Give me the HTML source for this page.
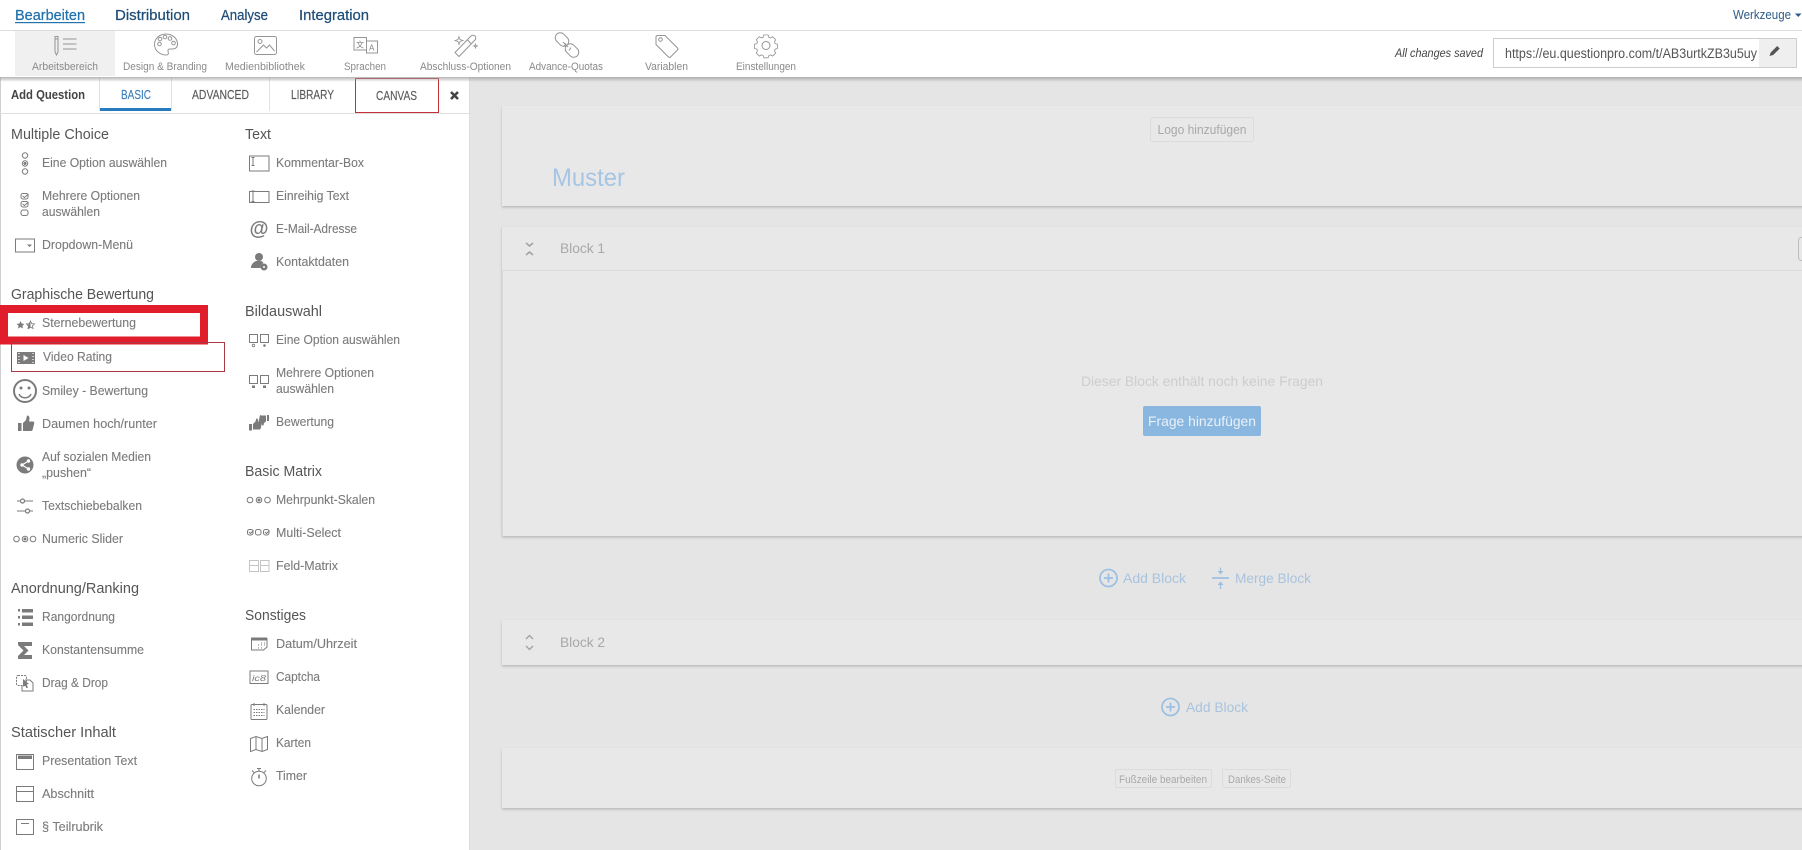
<!DOCTYPE html>
<html lang="de">
<head>
<meta charset="utf-8">
<title>Bearbeiten</title>
<style>
html,body{margin:0;padding:0;width:1802px;height:850px;overflow:hidden;background:#e5e5e5}
svg{display:block}
text{font-family:"Liberation Sans",sans-serif}
.nav{font-size:15px;fill:#1f4d78;stroke:#1f4d78;stroke-width:.25px}
.tb{font-size:11px;fill:#8a8a8a}
.tab{font-size:12.5px;fill:#5a5a5a;stroke:#5a5a5a;stroke-width:.15px}
.sec{font-size:14.5px;fill:#555}
.it{font-size:13px;fill:#7b7b7b;stroke:#7b7b7b;stroke-width:.12px}
.i{fill:none;stroke:#7b7b7b;stroke-width:1}
.f{fill:#7b7b7b;stroke:none}
.t{fill:none;stroke:#959595;stroke-width:1}
.lb{fill:none;stroke:#9dc0e2;stroke-width:1.8}
.ln{font-size:14px;fill:#a9c3de}
.btn{fill:#e8e8e8;stroke:#dcdcdc}
.sm{fill:#a8a8a8}
</style>
</head>
<body>
<svg width="1802" height="850" viewBox="0 0 1802 850" xmlns="http://www.w3.org/2000/svg">
<defs>
<filter id="s" x="-2%" y="-10%" width="104%" height="125%"><feDropShadow dx="0" dy="1.5" stdDeviation="1.2" flood-color="#000" flood-opacity=".2"/></filter>
<linearGradient id="hs" x1="0" y1="0" x2="0" y2="1"><stop offset="0" stop-color="#9d9d9d" stop-opacity=".75"/><stop offset="1" stop-color="#9d9d9d" stop-opacity="0"/></linearGradient>
</defs>

<!-- canvas -->
<rect width="1802" height="850" fill="#e5e5e5"/>
<g filter="url(#s)">
<rect x="502" y="106" width="1320" height="100" fill="#e8e8e8"/>
<rect x="502" y="226" width="1320" height="310" fill="#e8e8e8"/>
<rect x="502" y="620" width="1320" height="45" fill="#e8e8e8"/>
<rect x="502" y="748" width="1320" height="60" fill="#e8e8e8"/>
</g>
<rect x="502" y="106" width="1320" height="1" fill="#eaeaea"/>
<rect x="502" y="226" width="1320" height="1" fill="#e2e2e2"/>
<rect x="502" y="270" width="1320" height="1" fill="#dadada"/>
<rect x="502" y="271" width="1" height="265" fill="#d8d8d8"/>
<rect x="1150.5" y="117.5" width="103" height="24" rx="2" class="btn"/>
<text x="1157.5" y="134" font-size="12.5" textLength="89" lengthAdjust="spacingAndGlyphs" class="sm">Logo hinzufügen</text>
<text x="552" y="186" font-size="25" fill="#a6c5e5" textLength="73" lengthAdjust="spacingAndGlyphs">Muster</text>
<rect x="1798.5" y="237.5" width="8" height="23" rx="3" fill="#e8e8e8" stroke="#bdbdbd"/>
<path d="M526 243l3.5 3 3.5-3M526 255l3.500-3 3.500 3" fill="none" stroke="#a0a0a0" stroke-width="1.5"/>
<text x="560" y="253" font-size="14" textLength="45" lengthAdjust="spacingAndGlyphs" fill="#a8a8a8">Block 1</text>
<text x="1081" y="386" font-size="14" textLength="242" lengthAdjust="spacingAndGlyphs" fill="#cdcdcd">Dieser Block enthält noch keine Fragen</text>
<rect x="1143" y="406" width="118" height="30" rx="2" fill="#8ab7e0"/>
<text x="1148" y="426" font-size="14" textLength="108" lengthAdjust="spacingAndGlyphs" fill="#e8f1f9">Frage hinzufügen</text>

<circle cx="1108.5" cy="578" r="8.5" class="lb"/>
<path d="M1104 578h9M1108.500 573.500v9" class="lb"/>
<text x="1123" y="583" textLength="63" lengthAdjust="spacingAndGlyphs" class="ln">Add Block</text>
<path d="M1212 578h17" class="lb"/>
<path d="M1220.5 567.5v5" class="lb" style="stroke-width:1.300"/>
<path d="M1220.5 583v6" class="lb" style="stroke-width:1.300"/>
<path d="M1217.5 571h6l-3 3.500zM1217.500 585h6l-3-3.500z" fill="#9dc0e2"/>
<text x="1235" y="583" textLength="76" lengthAdjust="spacingAndGlyphs" class="ln">Merge Block</text>

<path d="M526 639l3.5-3.5 3.500 3.500M526 646l3.500 3.500 3.500-3.500" fill="none" stroke="#a0a0a0" stroke-width="1.3"/>
<text x="560" y="647" font-size="14" textLength="45" lengthAdjust="spacingAndGlyphs" fill="#a8a8a8">Block 2</text>

<circle cx="1170.5" cy="707" r="8.5" class="lb"/>
<path d="M1166 707h9M1170.500 702.500v9" class="lb"/>
<text x="1186" y="712" textLength="62" lengthAdjust="spacingAndGlyphs" class="ln">Add Block</text>

<rect x="1115.5" y="769.5" width="96" height="18" rx="1.5" class="btn"/>
<text x="1119" y="783" font-size="11" textLength="88" lengthAdjust="spacingAndGlyphs" class="sm">Fußzeile bearbeiten</text>
<rect x="1222.5" y="769.5" width="68" height="18" rx="1.5" class="btn"/>
<text x="1228" y="783" font-size="11" textLength="58" lengthAdjust="spacingAndGlyphs" class="sm">Dankes-Seite</text>

<!-- left panel -->
<rect x="0" y="77" width="469" height="773" fill="#fff"/>
<rect x="0" y="77" width="1" height="773" fill="#cfcfcf"/>
<rect x="469" y="77" width="1" height="773" fill="#dcdcdc"/>
<rect x="0" y="113" width="469" height="1" fill="#dfdfdf"/>
<text x="11" y="99" font-size="12.5" font-weight="bold" fill="#444" textLength="74" lengthAdjust="spacingAndGlyphs">Add Question</text>
<rect x="99" y="77" width="1" height="34" fill="#e2e2e2"/>
<rect x="171" y="77" width="1" height="34" fill="#e2e2e2"/>
<rect x="269" y="77" width="1" height="34" fill="#e2e2e2"/>
<rect x="100" y="108" width="71" height="3" fill="#2a7abf"/>
<text x="121" y="99" textLength="30" lengthAdjust="spacingAndGlyphs" class="tab" style="fill:#3a80bd;stroke:#3a80bd">BASIC</text>
<text x="192" y="99" textLength="57" lengthAdjust="spacingAndGlyphs" class="tab">ADVANCED</text>
<text x="291" y="99" textLength="43" lengthAdjust="spacingAndGlyphs" class="tab">LIBRARY</text>
<rect x="355.5" y="78.5" width="83" height="34" fill="#fff" stroke="#c4303a"/>
<text x="376" y="100" textLength="41" lengthAdjust="spacingAndGlyphs" class="tab">CANVAS</text>
<path d="M451 92l7 7M458 92l-7 7" stroke="#444" stroke-width="2.6" fill="none"/>

<!-- highlight boxes -->
<path d="M4 309h200v31.500H4z" fill="none" stroke="#e11d2b" stroke-width="8"/>
<rect x="11.5" y="342.5" width="213" height="29" fill="none" stroke="#a83a45"/>

<!-- left column -->
<text x="11" y="139" textLength="98" lengthAdjust="spacingAndGlyphs" class="sec">Multiple Choice</text>
<text x="42" y="167" textLength="125" lengthAdjust="spacingAndGlyphs" class="it">Eine Option auswählen</text>
<text x="42" y="200" textLength="98" lengthAdjust="spacingAndGlyphs" class="it">Mehrere Optionen</text>
<text x="42" y="216" textLength="58" lengthAdjust="spacingAndGlyphs" class="it">auswählen</text>
<text x="42" y="249" textLength="91" lengthAdjust="spacingAndGlyphs" class="it">Dropdown-Menü</text>
<text x="11" y="299" textLength="143" lengthAdjust="spacingAndGlyphs" class="sec">Graphische Bewertung</text>
<text x="42" y="327" textLength="94" lengthAdjust="spacingAndGlyphs" class="it">Sternebewertung</text>
<text x="43" y="361" textLength="69" lengthAdjust="spacingAndGlyphs" class="it">Video Rating</text>
<text x="42" y="395" textLength="106" lengthAdjust="spacingAndGlyphs" class="it">Smiley - Bewertung</text>
<text x="42" y="428" textLength="115" lengthAdjust="spacingAndGlyphs" class="it">Daumen hoch/runter</text>
<text x="42" y="461" textLength="109" lengthAdjust="spacingAndGlyphs" class="it">Auf sozialen Medien</text>
<text x="42" y="477" textLength="49" lengthAdjust="spacingAndGlyphs" class="it">„pushen“</text>
<text x="42" y="510" textLength="100" lengthAdjust="spacingAndGlyphs" class="it">Textschiebebalken</text>
<text x="42" y="543" textLength="81" lengthAdjust="spacingAndGlyphs" class="it">Numeric Slider</text>
<text x="11" y="593" textLength="128" lengthAdjust="spacingAndGlyphs" class="sec">Anordnung/Ranking</text>
<text x="42" y="621" textLength="73" lengthAdjust="spacingAndGlyphs" class="it">Rangordnung</text>
<text x="42" y="654" textLength="102" lengthAdjust="spacingAndGlyphs" class="it">Konstantensumme</text>
<text x="42" y="687" textLength="66" lengthAdjust="spacingAndGlyphs" class="it">Drag &amp; Drop</text>
<text x="11" y="737" textLength="105" lengthAdjust="spacingAndGlyphs" class="sec">Statischer Inhalt</text>
<text x="42" y="765" textLength="95" lengthAdjust="spacingAndGlyphs" class="it">Presentation Text</text>
<text x="42" y="798" textLength="52" lengthAdjust="spacingAndGlyphs" class="it">Abschnitt</text>
<text x="42" y="831" textLength="61" lengthAdjust="spacingAndGlyphs" class="it">§ Teilrubrik</text>

<!-- right column -->
<text x="245" y="139" textLength="26" lengthAdjust="spacingAndGlyphs" class="sec">Text</text>
<text x="276" y="167" textLength="88" lengthAdjust="spacingAndGlyphs" class="it">Kommentar-Box</text>
<text x="276" y="200" textLength="73" lengthAdjust="spacingAndGlyphs" class="it">Einreihig Text</text>
<text x="276" y="233" textLength="81" lengthAdjust="spacingAndGlyphs" class="it">E-Mail-Adresse</text>
<text x="276" y="266" textLength="73" lengthAdjust="spacingAndGlyphs" class="it">Kontaktdaten</text>
<text x="245" y="316" textLength="77" lengthAdjust="spacingAndGlyphs" class="sec">Bildauswahl</text>
<text x="276" y="344" textLength="124" lengthAdjust="spacingAndGlyphs" class="it">Eine Option auswählen</text>
<text x="276" y="377" textLength="98" lengthAdjust="spacingAndGlyphs" class="it">Mehrere Optionen</text>
<text x="276" y="393" textLength="58" lengthAdjust="spacingAndGlyphs" class="it">auswählen</text>
<text x="276" y="426" textLength="58" lengthAdjust="spacingAndGlyphs" class="it">Bewertung</text>
<text x="245" y="476" textLength="77" lengthAdjust="spacingAndGlyphs" class="sec">Basic Matrix</text>
<text x="276" y="504" textLength="99" lengthAdjust="spacingAndGlyphs" class="it">Mehrpunkt-Skalen</text>
<text x="276" y="537" textLength="65" lengthAdjust="spacingAndGlyphs" class="it">Multi-Select</text>
<text x="276" y="570" textLength="62" lengthAdjust="spacingAndGlyphs" class="it">Feld-Matrix</text>
<text x="245" y="620" textLength="61" lengthAdjust="spacingAndGlyphs" class="sec">Sonstiges</text>
<text x="276" y="648" textLength="81" lengthAdjust="spacingAndGlyphs" class="it">Datum/Uhrzeit</text>
<text x="276" y="681" textLength="44" lengthAdjust="spacingAndGlyphs" class="it">Captcha</text>
<text x="276" y="714" textLength="49" lengthAdjust="spacingAndGlyphs" class="it">Kalender</text>
<text x="276" y="747" textLength="35" lengthAdjust="spacingAndGlyphs" class="it">Karten</text>
<text x="276" y="780" textLength="31" lengthAdjust="spacingAndGlyphs" class="it">Timer</text>

<!-- left icons -->
<circle cx="25" cy="155.5" r="2.7" class="i"/><circle cx="25" cy="163.5" r="2.7" class="i"/><circle cx="25" cy="163.5" r="1.5" class="f"/><circle cx="25" cy="171.5" r="2.7" class="i"/>
<rect x="21" y="193.5" width="7" height="5.5" rx="2" class="i"/><rect x="21" y="201.5" width="7" height="5.5" rx="2" class="i"/><rect x="21" y="210" width="7" height="5.5" rx="2" class="i"/><path d="M22.5 196l2 1.500 4-3.500M22.500 204l2 1.500 4-3.500" class="i"/>
<rect x="15.5" y="239" width="19" height="13" class="i"/><path d="M27 244.500h5l-2.500 2.500z" class="f"/>
<path d="M20.500 321l1.200 2.600 2.800.3-2.100 1.900.6 2.700-2.500-1.400-2.500 1.400.6-2.700-2.100-1.900 2.800-.3z" class="f"/>
<path d="M30.500 321l1.200 2.600 2.800.3-2.100 1.900.6 2.700-2.500-1.400-2.500 1.400.6-2.700-2.100-1.900 2.800-.3z" class="i" style="stroke-width:.8"/><path d="M30.500 321v6.800l-2.500 1.400.6-2.700-2.100-1.900 2.800-.3z" class="f"/>
<rect x="17" y="352" width="18" height="12" class="f"/><path d="M23.500 355v6l5-3z" fill="#fff"/><path d="M18 353.500h2M18 356.500h2M18 359.500h2M18 362.500h2M32 353.500h2M32 356.500h2M32 359.500h2M32 362.500h2" stroke="#ccc" stroke-width="1"/>
<circle cx="25" cy="391" r="11" fill="none" stroke="#7b7b7b" stroke-width="2"/><circle cx="21" cy="388" r="1.5" class="f"/><circle cx="29" cy="388" r="1.5" class="f"/><path d="M19 394c2 5 10 5 12 0" fill="none" stroke="#7b7b7b" stroke-width="1.5"/>
<path d="M18 423h3.500v8H18zM23 423l3-3 1-4.500c2 0 3 1.500 2.300 4.500l-.3 1.500h4c1 0 1.500 1 1.200 2l-1.500 6c-.2.800-.8 1.500-1.700 1.500H23z" class="f"/>
<circle cx="25" cy="465" r="8.5" class="f"/><path d="M28.500 461l-6.500 4 6.500 4" fill="none" stroke="#fff" stroke-width="1.2"/><circle cx="28.500" cy="461" r="1.7" fill="#fff"/><circle cx="22" cy="465" r="1.7" fill="#fff"/><circle cx="28.500" cy="469" r="1.7" fill="#fff"/>
<path d="M17 501h16M17 511h16" class="i"/><circle cx="22.500" cy="501" r="2" fill="#fff" stroke="#7b7b7b" stroke-width="1.2"/><circle cx="27.500" cy="511" r="2" fill="#fff" stroke="#7b7b7b" stroke-width="1.2"/>
<circle cx="16.500" cy="539" r="2.8" class="i"/><circle cx="25" cy="539" r="2.8" class="i"/><circle cx="25" cy="539" r="1.5" class="f"/><circle cx="33" cy="539" r="2.8" class="i"/>
<path d="M22 609h11v3.500H22zM22 615.500h11v3.500H22zM22 622.500h11v3.500H22z" class="f"/><path d="M18 609h2v2.500h-2zM18 616h2v2.500h-2zM18 623h2v2.500h-2z" class="f"/>
<path d="M18 642h14v4h-8l4.500 4.500-4.500 4.500h8v4H18v-3l5.500-5.500L18 645z" class="f"/>
<rect x="16.5" y="675.5" width="10" height="10" rx="1.5" class="i" stroke-dasharray="2 1"/><path d="M25 680h5l3 3v8H22v-6" class="i"/><path d="M23 679l6 5-2.500.5 1.500 3-1.500.7-1.500-3-2 1.500z" class="f"/>
<rect x="16.5" y="754.5" width="17" height="15" class="i"/><rect x="18" y="755.500" width="14" height="3.5" class="f"/>
<rect x="16.5" y="786.5" width="17" height="15" class="i"/><path d="M17 791.500h16" class="i"/>
<rect x="16.5" y="819.5" width="17" height="15" class="i"/><path d="M21 823.500h8" class="i"/>

<!-- right icons -->
<rect x="249.5" y="156" width="19.5" height="15" class="i"/><path d="M251.5 157.500h3M253 157.500v8M251.500 165.500h3" class="i"/>
<rect x="249.5" y="191.5" width="19.5" height="11" class="i"/><path d="M251.5 191h3M253 191v10.500M251.500 201.500h3" class="i"/>
<text x="249.5" y="235" font-size="20" font-weight="bold" fill="#7b7b7b" textLength="19" lengthAdjust="spacingAndGlyphs">@</text>
<circle cx="259" cy="257" r="4" class="f"/><path d="M251 268c0-4 3-6 5-7h5c1.500.5 2 1 2.500 2-2 1-3 3-3 5z" class="f"/><circle cx="264" cy="267" r="3.5" class="f"/><circle cx="264" cy="267" r="1" fill="#fff"/>
<rect x="249.5" y="334.5" width="8" height="8" class="i"/><rect x="260.5" y="334.5" width="8" height="8" class="i"/><circle cx="253.500" cy="345.500" r="1.3" class="i" style="stroke-width:.8"/><circle cx="264.500" cy="345.500" r="1.3" class="f"/>
<rect x="249.5" y="375.5" width="8" height="8" class="i"/><rect x="260.5" y="375.5" width="8" height="8" class="i"/><rect x="252" y="385.500" width="3" height="2.5" class="f"/><rect x="263" y="385.500" width="3" height="2.5" class="f"/>
<path transform="translate(0 3)" d="M249 421h3v6.500h-3zM253 421l2.500-2.500.7-3c1.500 0 2.300 1 1.800 3.200h3c.8 0 1.100.7.900 1.500l-1.200 5.300c-.2.600-.6 1-1.300 1H253z" class="f"/>
<path d="M267 415h2v6h-2zM261 415.500h5v6l-2 1.500-.5 2.500c-1.500 0-2-1-1.500-3h-2.500c-.7 0-1-.6-.8-1.300l1-5c.2-.7.500-1.200 1.300-1.200z" class="f"/>
<circle cx="250" cy="500" r="2.8" class="i"/><circle cx="259" cy="500" r="2.8" class="i"/><circle cx="259" cy="500" r="1.5" class="f"/><circle cx="267.500" cy="500" r="2.8" class="i"/>
<rect x="247.5" y="529.5" width="5.500" height="5.5" rx="2" class="i"/><rect x="255.5" y="529.5" width="5.5" height="5.5" rx="2" class="i"/><rect x="263.5" y="529.5" width="5.5" height="5.5" rx="2" class="i"/><path d="M249 532l1.500 1.500 3-3M265 532l1.500 1.500 3-3" class="i"/>
<path d="M249.500 560.500h9v5h-9zM249.500 565.500h9v6h-9zM260.500 560.500h8.500v5h-8.500zM260.500 565.500h8.500v6h-8.500z" fill="none" stroke="#c4c4c4"/>
<path d="M251 637.500h16v3h-16z" class="f"/><path d="M251.500 638v12h12l3.500-3v-9" class="i"/><path d="M258 645h1M261 645h1M264 645h1M258 648h1M261 648h1M264 643h1M261 643h1" stroke="#7b7b7b"/>
<rect x="250" y="671" width="18" height="12.5" class="i"/><text x="252" y="681" font-size="8" font-style="italic" fill="#7b7b7b" textLength="14" lengthAdjust="spacingAndGlyphs">ic8</text>
<rect x="251" y="704.5" width="16" height="15" rx="1" class="i"/><path d="M254 703v3M264 703v3" class="i"/><path d="M253.500 709.500h11M253.500 712.500h11M253.500 715.500h11" stroke="#7b7b7b" stroke-dasharray="1.5 1" fill="none"/>
<path d="M250.500 738.500l5.500-2 6 2 5.500-2v13l-5.500 2-6-2-5.500 2zM256 736.500v13M262 738.500v13" class="i"/>
<circle cx="259" cy="778.5" r="7.3" class="i"/><path d="M259 774.500v4" stroke="#7b7b7b" stroke-width="1.5"/><path d="M257 768.500h4M259 768.500v2.500M252 770.500l2 2M266 770.500l-2 2" class="i"/>

<!-- header -->
<rect x="0" y="77" width="1802" height="5" fill="url(#hs)"/>
<rect x="0" y="0" width="1802" height="77" fill="#fff"/>
<rect x="0" y="30" width="1802" height="1" fill="#dcdcdc"/>
<rect x="15" y="31" width="100" height="45" fill="#f0f0f0"/>

<text x="15" y="20" textLength="70" lengthAdjust="spacingAndGlyphs" class="nav" style="fill:#2272ad;stroke:#2272ad">Bearbeiten</text>
<rect x="15" y="22" width="70" height="1.2" fill="#2272ad"/>
<text x="115" y="20" textLength="75" lengthAdjust="spacingAndGlyphs" class="nav">Distribution</text>
<text x="221" y="20" textLength="47" lengthAdjust="spacingAndGlyphs" class="nav">Analyse</text>
<text x="299" y="20" textLength="70" lengthAdjust="spacingAndGlyphs" class="nav">Integration</text>
<text x="1733" y="19" font-size="13" fill="#2d5b85" textLength="58" lengthAdjust="spacingAndGlyphs">Werkzeuge</text>
<path d="M1795 13.500h6.500l-3.250 3.500z" fill="#2d5b85"/>

<text x="32" y="70" textLength="66" lengthAdjust="spacingAndGlyphs" class="tb">Arbeitsbereich</text>
<text x="123" y="70" textLength="84" lengthAdjust="spacingAndGlyphs" class="tb">Design &amp; Branding</text>
<text x="225" y="70" textLength="80" lengthAdjust="spacingAndGlyphs" class="tb">Medienbibliothek</text>
<text x="344" y="70" textLength="42" lengthAdjust="spacingAndGlyphs" class="tb">Sprachen</text>
<text x="420" y="70" textLength="91" lengthAdjust="spacingAndGlyphs" class="tb">Abschluss-Optionen</text>
<text x="529" y="70" textLength="74" lengthAdjust="spacingAndGlyphs" class="tb">Advance-Quotas</text>
<text x="645" y="70" textLength="43" lengthAdjust="spacingAndGlyphs" class="tb">Variablen</text>
<text x="736" y="70" textLength="60" lengthAdjust="spacingAndGlyphs" class="tb">Einstellungen</text>

<!-- toolbar icons -->
<path d="M55 36.500h3v15.500l-1.500 3-1.500-3z" class="t"/><path d="M55 39h3" class="t"/><path d="M63 39h13.500M63 44h13.500M63 49h13.500" class="t"/>
<path d="M166 34c6.500 0 11.500 4.500 11.500 10 0 4-3 5-5.500 5h-2c-2 0-2.500 1.500-1.800 3 .7 2-.2 3-2.200 3-6 0-11.500-4.500-11.500-10.500S159.500 34 166 34z" class="t"/><circle cx="159.500" cy="44" r="1.8" class="t"/><circle cx="160" cy="39" r="1.8" class="t"/><circle cx="165" cy="37" r="1.8" class="t"/><circle cx="170" cy="38.500" r="1.8" class="t"/><circle cx="173.500" cy="43" r="1.8" class="t"/>
<rect x="254.500" y="36.500" width="22" height="18" rx="2" class="t"/><circle cx="260" cy="41.500" r="2" class="t"/><path d="M256.500 52l7-7 3 3 3-3 5 6" class="t"/>
<rect x="354" y="37.500" width="12.500" height="12.500" fill="#fff" stroke="#959595"/><rect x="366.500" y="41" width="11" height="12" fill="#fff" stroke="#959595"/><text x="356" y="47.500" font-size="8" fill="#808080" style="font-family:'Noto Sans CJK SC',sans-serif">文</text><text x="369" y="50.500" font-size="8" fill="#808080">A</text>
<path d="M455 52.500l16-16.500c1-1 3-1 4 0s1 3 0 4l-16 16.500-4-4zM467.500 40l4 4" class="t"/><path d="M459 36.500l1 3 3 1-3 1-1 3-1-3-3-1 3-1zM475.500 44l.5 1.500 1.500.5-1.500.5-.5 1.500-.5-1.500-1.500-.5 1.500-.5z" class="t" style="stroke-width:.8"/>
<g class="t"><rect x="554.500" y="34.500" width="15" height="10" rx="5" transform="rotate(45 562 39.500)"/><rect x="564.500" y="45.500" width="15" height="10" rx="5" transform="rotate(45 572 50.500)"/><path d="M563 42l5 5M566 43.500l-2 3M571 47.500l-2 3"/></g>
<path d="M657 35.500h8l12.500 12.500c.6.600.6 1.400 0 2l-7 7c-.6.600-1.400.6-2 0L656 44.500v-8z" class="t"/><circle cx="660.500" cy="39.500" r="1.8" class="t"/>
<path d="M763.500 35h5l.8 2.800 2 .8 2.600-1.400 3.500 3.500-1.400 2.600.8 2 2.700.7v5l-2.700.8-.8 2 1.400 2.600-3.500 3.500-2.600-1.400-2 .8-.8 2.700h-5l-.8-2.700-2-.8-2.600 1.400-3.500-3.500 1.400-2.600-.8-2-2.700-.8v-5l2.700-.7.800-2-1.400-2.600 3.500-3.500 2.600 1.400 2-.8z" class="t" transform="translate(766 45.500) scale(.85) translate(-766 -47.500)"/><circle cx="766" cy="45.500" r="4" class="t"/>

<!-- url box -->
<text x="1395" y="57" font-size="11.5" font-style="italic" fill="#444" textLength="88" lengthAdjust="spacingAndGlyphs">All changes saved</text>
<rect x="1493.5" y="38.5" width="303" height="29" fill="#fff" stroke="#cdcdcd"/>
<rect x="1759" y="39" width="37" height="28" fill="#efefef"/>
<text x="1505" y="58" font-size="13.5" fill="#555" textLength="252" lengthAdjust="spacingAndGlyphs">https://eu.questionpro.com/t/AB3urtkZB3u5uy</text>
<path d="M1769.500 56l1.200-3.500 6.500-6.500 2.500 2.500-6.500 6.500z" fill="#555"/>
</svg>
</body>
</html>
